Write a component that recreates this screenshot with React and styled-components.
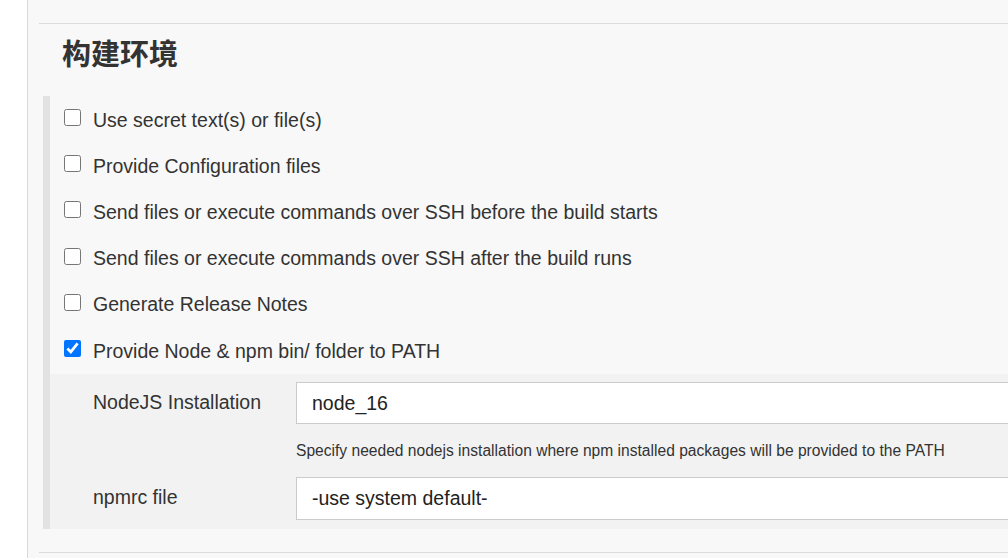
import React from "react";
import styled, { createGlobalStyle } from "styled-components";

const GlobalStyle = createGlobalStyle`
  html, body {
    margin: 0;
    padding: 0;
    background: #fff;
    overflow: hidden;
  }
  body {
    font-family: "Liberation Sans", Arial, "Noto Sans CJK SC", sans-serif;
    color: #333;
  }
`;

const Page = styled.div`
  display: flex;
  width: 1100px;
  height: 558px;
`;

const Gutter = styled.div`
  width: 27px;
  flex: none;
  border-right: 1px solid #d9d9d9;
  background: #fff;
`;

const Main = styled.div`
  flex: 1;
  background: #f8f8f8;
  padding: 23px 0 0 11px;
`;

const Divider = styled.div`
  height: 1px;
  background: #dcdcdc;
`;

const Heading = styled.h2`
  margin: 0;
  padding: 11px 0 0 23px;
  height: 49px;
  font-family: "Noto Sans CJK SC", "Liberation Sans", sans-serif;
  font-size: 29px;
  font-weight: 700;
  line-height: 34px;
  color: #333;
`;

const Section = styled.div`
  margin: 12px 0 23px 4px;
  border-left: 7px solid #e2e2e2;
  padding-top: 1px;
`;

const CheckRow = styled.label`
  display: flex;
  align-items: center;
  height: 46.2px;
  padding-left: 14px;
  gap: 12px;
  font-size: 19.5px;
  color: #333;
`;

const Box = styled.input`
  width: 17px;
  height: 17px;
  margin: 0 0 5px 0;
  flex: none;
  accent-color: #0075ff;
`;

const Nested = styled.div`
  background: #f2f2f2;
  padding: 8px 0 9px 43px;
  display: grid;
  grid-template-columns: 203px 1fr;
  align-items: center;
`;

const Label = styled.div`
  font-size: 19.5px;
  color: #333;
  padding-bottom: 2px;
`;

const Field = styled.div`
  height: ${(p) => p.$h}px;
  box-sizing: border-box;
  background: #fff;
  border: 1px solid #cbcbcb;
  display: flex;
  align-items: center;
  padding-left: 15px;
  font-size: 19.5px;
  color: #222;
`;

const Help = styled.div`
  grid-column: 2;
  height: 53px;
  display: flex;
  align-items: center;
  font-size: 15.6px;
  color: #333;
`;

const options = [
  { text: "Use secret text(s) or file(s)" },
  { text: "Provide Configuration files" },
  { text: "Send files or execute commands over SSH before the build starts" },
  { text: "Send files or execute commands over SSH after the build runs" },
  { text: "Generate Release Notes" },
  { text: "Provide Node & npm bin/ folder to PATH", checked: true },
];

export default function App() {
  return (
    <>
      <GlobalStyle />
      <Page>
        <Gutter />
        <Main>
          <Divider />
          <Heading>构建环境</Heading>
          <Section>
            {options.map((o) => (
              <CheckRow key={o.text}>
                <Box type="checkbox" defaultChecked={!!o.checked} />
                {o.text}
              </CheckRow>
            ))}
            <Nested>
              <Label>NodeJS Installation</Label>
              <Field $h={42}>node_16</Field>
              <Help>
                Specify needed nodejs installation where npm installed packages will be provided to the PATH
              </Help>
              <Label>npmrc file</Label>
              <Field $h={43}>-use system default-</Field>
            </Nested>
          </Section>
          <Divider />
        </Main>
      </Page>
    </>
  );
}
